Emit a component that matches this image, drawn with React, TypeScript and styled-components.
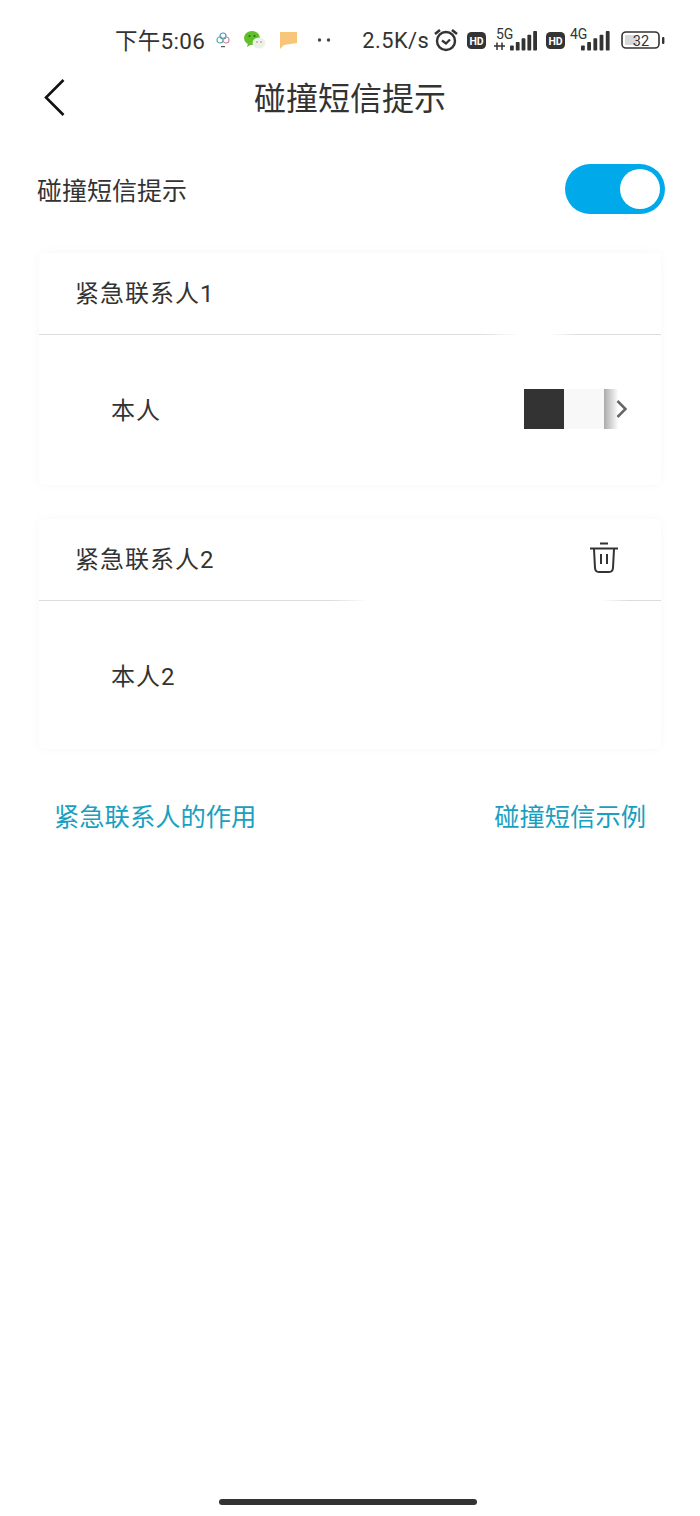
import React from 'react';
import styled, { createGlobalStyle } from 'styled-components';

const GlobalStyle = createGlobalStyle`
  html, body {
    margin: 0;
    padding: 0;
    background: #fff;
  }
  body {
    font-family: Roboto, "Noto Sans CJK SC", sans-serif;
    color: #333;
  }
`;

const Page = styled.div`
  width: 700px;
  height: 1516px;
  background: #fff;
  display: flex;
  flex-direction: column;
`;

const StatusBar = styled.div`
  height: 26px;
  margin-top: 27px;
  padding-left: 115px;
  display: flex;
  align-items: center;
  color: #333;
`;

const StatusTime = styled.span`
  font-family: Roboto, "Noto Sans CJK SC", sans-serif;
  font-size: 22.5px;
  letter-spacing: 0.3px;
  line-height: 26px;
  white-space: nowrap;
  padding-top: 2px;
`;

const StatusSpeed = styled(StatusTime)<{ $left: number }>`
  font-size: 21.8px;
  letter-spacing: 0.5px;
  margin-left: ${({ $left }) => $left}px;
`;

const StatusIcon = styled.svg<{ $left: number }>`
  display: block;
  flex: none;
  margin-left: ${({ $left }) => $left}px;
`;

const NavBar = styled.div`
  height: 64px;
  margin-top: 13px;
  padding-left: 44px;
  position: relative;
  display: flex;
  align-items: center;
`;

const BackIcon = styled.svg`
  position: relative;
  z-index: 1;
`;

const NavTitle = styled.h1`
  position: absolute;
  left: 0;
  right: 0;
  top: 0;
  bottom: 4px;
  margin: 0;
  display: flex;
  align-items: center;
  justify-content: center;
  font-size: 32px;
  font-weight: 400;
  color: #333;
`;

const SwitchRow = styled.div`
  height: 50px;
  margin-top: 34px;
  padding: 0 35px 0 37px;
  display: flex;
  align-items: center;
  justify-content: space-between;
`;

const SwitchLabel = styled.span`
  font-size: 25px;
  color: #333;
`;

const Toggle = styled.div`
  width: 100px;
  height: 50px;
  border-radius: 25px;
  background: #00a9e9;
  padding: 5px;
  box-sizing: border-box;
  display: flex;
  justify-content: flex-end;
`;

const Knob = styled.div`
  width: 40px;
  height: 40px;
  border-radius: 50%;
  background: #fff;
`;

const CardList = styled.div`
  margin: 39px 39px 0;
  display: flex;
  flex-direction: column;
  gap: 34px;
`;

const Card = styled.section<{ $height: number }>`
  height: ${({ $height }) => $height}px;
  background: #fff;
  border-radius: 6px;
  box-shadow: 0 0 12px rgba(0, 0, 0, 0.035);
`;

const CardHeader = styled.div<{ $fadeFrom: number; $fadeTo: number }>`
  height: 82px;
  padding: 0 42px 0 36px;
  box-sizing: border-box;
  display: flex;
  align-items: center;
  justify-content: space-between;
  border-bottom: 1px solid transparent;
  border-image: linear-gradient(
      to right,
      #dcdcdc ${({ $fadeFrom }) => $fadeFrom}px,
      #fff ${({ $fadeFrom }) => $fadeFrom + 40}px,
      #fff ${({ $fadeTo }) => $fadeTo - 30}px,
      #dcdcdc ${({ $fadeTo }) => $fadeTo}px
    )
    1;
`;

const CardTitle = styled.span`
  font-size: 24px;
  letter-spacing: 1px;
  color: #333;
  margin-top: -5px;
`;

const TrashIcon = styled.svg`
  margin-top: -3px;
`;

const CardBody = styled.div`
  height: 150px;
  padding: 0 33px 0 72px;
  display: flex;
  align-items: center;
  justify-content: space-between;
  box-sizing: border-box;
`;

const ContactName = styled.span`
  font-size: 24px;
  letter-spacing: 1px;
  color: #333;
  margin-top: -3px;
`;

const ContactValue = styled.div`
  display: flex;
  align-items: center;
  position: relative;
  margin-top: -3px;
`;

const Redaction = styled.div<{ $width: number; $fill: string }>`
  width: ${({ $width }) => $width}px;
  height: 40px;
  background: ${({ $fill }) => $fill};
`;

const ChevronIcon = styled.svg`
  position: absolute;
  right: 0;
  top: 11px;
`;

const LinkRow = styled.div`
  margin-top: 53px;
  padding: 0 54px;
  display: flex;
  justify-content: space-between;
`;

const HelpLink = styled.a`
  font-size: 25.3px;
  color: #19a0c0;
  line-height: 32px;
`;

const Spacer = styled.div`
  flex: 1;
`;

const HomeBar = styled.div`
  width: 258px;
  height: 6px;
  border-radius: 3px;
  background: #333;
  margin: 0 0 11px 219px;
`;

const SignalBars = ({ offset, step }: { offset: number; step: number }) => (
  <>
    {[0, 1, 2, 3, 4].map((i) => {
      const h = 5 + i * 3.6;
      return <rect key={i} x={offset + i * step} y={22.5 - h} width={3.8} height={h} rx={0.8} fill="#333" />;
    })}
  </>
);

const HdBadge = ({ left }: { left: number }) => (
  <StatusIcon $left={left} width={19} height={17} viewBox="0 0 19 17">
    <rect width="19" height="17" rx="4.5" fill="#333" />
    <text x="9.5" y="12.5" fontSize="10.5" fontWeight="700" textAnchor="middle" fill="#fff" fontFamily="Roboto, sans-serif">HD</text>
  </StatusIcon>
);

const App: React.FC = () => (
  <Page>
    <GlobalStyle />
    <StatusBar>
      <StatusTime>下午5:06</StatusTime>
      <StatusIcon $left={10} width={16} height={18} viewBox="0 0 16 18">
        <circle cx="8" cy="5" r="3" fill="none" stroke="#4f8fc0" strokeWidth="1.2" />
        <circle cx="5" cy="9" r="3" fill="none" stroke="#4fb0a0" strokeWidth="1.2" />
        <circle cx="11" cy="9" r="3" fill="none" stroke="#d08aa0" strokeWidth="1.2" />
        <rect x="6" y="15" width="4" height="1.2" fill="#555" />
      </StatusIcon>
      <StatusIcon $left={13} width={22} height={20} viewBox="0 0 22 20">
        <ellipse cx="8" cy="8" rx="8" ry="7" fill="#5fc02c" />
        <path d="M4 13 L3 17 L8 14 Z" fill="#5fc02c" />
        <circle cx="5.5" cy="6" r="1" fill="#2c6a10" />
        <circle cx="10.5" cy="6" r="1" fill="#2c6a10" />
        <ellipse cx="15" cy="13" rx="6.5" ry="5.5" fill="#eef2e6" />
        <circle cx="13" cy="12" r="0.8" fill="#889" />
        <circle cx="17" cy="12" r="0.8" fill="#889" />
      </StatusIcon>
      <StatusIcon $left={13} width={18} height={19} viewBox="0 0 18 19">
        <path d="M1 1 H18 V12 L5 14 L1 18 Z" fill="#f7c678" />
      </StatusIcon>
      <StatusIcon $left={20} width={14} height={6} viewBox="0 0 14 6">
        <circle cx="2.5" cy="3" r="1.7" fill="#444" />
        <circle cx="11.5" cy="3" r="1.7" fill="#444" />
      </StatusIcon>
      <StatusSpeed $left={31}>2.5K/s</StatusSpeed>
      <StatusIcon $left={4} width={26} height={24} viewBox="0 0 26 24">
        <circle cx="13" cy="13" r="9" fill="none" stroke="#333" strokeWidth="2.4" />
        <path d="M9 12.5 L13 15.5 L17 11.5" fill="none" stroke="#333" strokeWidth="2.2" />
        <path d="M2 6 L7 2 M24 6 L19 2" stroke="#333" strokeWidth="2.6" />
      </StatusIcon>
      <HdBadge left={8} />
      <StatusIcon $left={8} width={44} height={29} viewBox="0 -2 44 29">
        <text x="2" y="10.5" fontSize="14" fill="#333" fontFamily="Roboto, sans-serif">5G</text>
        <path d="M0 18 H11 M3 14.5 V22 M8 14.5 V22" stroke="#333" strokeWidth="1.5" />
        <SignalBars offset={16} step={5.8} />
      </StatusIcon>
      <HdBadge left={8} />
      <StatusIcon $left={5} width={41} height={29} viewBox="0 -2 41 29">
        <text x="0" y="10.5" fontSize="14" fill="#333" fontFamily="Roboto, sans-serif">4G</text>
        <SignalBars offset={11} step={6.2} />
      </StatusIcon>
      <StatusIcon $left={10} width={44} height={18} viewBox="0 0 44 18">
        <rect x="1" y="1" width="37" height="16" rx="4" fill="#fff" stroke="#333" strokeWidth="1.6" />
        <rect x="4" y="4" width="12" height="10" fill="#d8d8d8" />
        <text x="20" y="14.5" fontSize="14.5" textAnchor="middle" fill="#333" fontFamily="Roboto, sans-serif">32</text>
        <rect x="41" y="6" width="2.4" height="7" rx="1" fill="#333" />
      </StatusIcon>
    </StatusBar>

    <NavBar>
      <BackIcon width="22" height="38" viewBox="0 0 22 38">
        <path d="M19.5 1 L2 18.5 L19.5 36" fill="none" stroke="#111" strokeWidth="2.6" />
      </BackIcon>
      <NavTitle>碰撞短信提示</NavTitle>
    </NavBar>

    <SwitchRow>
      <SwitchLabel>碰撞短信提示</SwitchLabel>
      <Toggle>
        <Knob />
      </Toggle>
    </SwitchRow>

    <CardList>
      <Card $height={232}>
        <CardHeader $fadeFrom={440} $fadeTo={540}>
          <CardTitle>紧急联系人1</CardTitle>
        </CardHeader>
        <CardBody>
          <ContactName>本人</ContactName>
          <ContactValue>
            <Redaction $width={40} $fill="#333" />
            <Redaction $width={40} $fill="#f8f8f8" />
            <Redaction $width={24} $fill="linear-gradient(to right, #aaa, #fff 60%)" />
            <ChevronIcon width="12" height="18" viewBox="0 0 12 18">
              <path d="M1.5 1 L9.5 9 L1.5 17" fill="none" stroke="#666" strokeWidth="2.5" />
            </ChevronIcon>
          </ContactValue>
        </CardBody>
      </Card>
      <Card $height={230}>
        <CardHeader $fadeFrom={290} $fadeTo={590}>
          <CardTitle>紧急联系人2</CardTitle>
          <TrashIcon width="30" height="32" viewBox="0 0 30 32">
            <path d="M1 6.5 H29 M11 1.5 H19 M5 7 L6 26 Q6.3 30 10 30 H20 Q23.7 30 24 26 L25 7 M12 12 V22 M18 12 V22" fill="none" stroke="#333" strokeWidth="2" />
          </TrashIcon>
        </CardHeader>
        <CardBody>
          <ContactName>本人2</ContactName>
        </CardBody>
      </Card>
    </CardList>

    <LinkRow>
      <HelpLink>紧急联系人的作用</HelpLink>
      <HelpLink>碰撞短信示例</HelpLink>
    </LinkRow>

    <Spacer />
    <HomeBar />
  </Page>
);

export default App;
